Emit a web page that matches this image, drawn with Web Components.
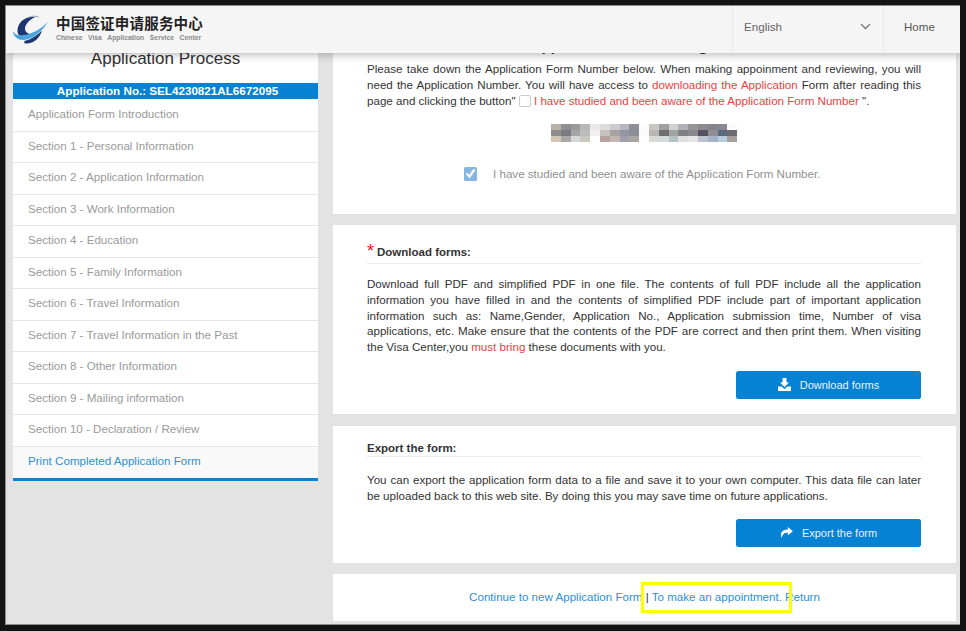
<!DOCTYPE html>
<html><head><meta charset="utf-8">
<style>
html,body{margin:0;height:100%;background:#141414;overflow:hidden}
body{padding:5px 6px 6px 5px;box-sizing:border-box;font:11.6px/15.75px "Liberation Sans","Noto Sans CJK SC",sans-serif;color:#333}
</style></head><body>
<visa-window>
  <visa-header slot="header"></visa-header>
  <visa-sidebar slot="side" number="SEL4230821AL6672095">
    <visa-step>Application Form Introduction</visa-step>
    <visa-step>Section 1 - Personal Information</visa-step>
    <visa-step>Section 2 - Application Information</visa-step>
    <visa-step>Section 3 - Work Information</visa-step>
    <visa-step>Section 4 - Education</visa-step>
    <visa-step>Section 5 - Family Information</visa-step>
    <visa-step>Section 6 - Travel Information</visa-step>
    <visa-step>Section 7 - Travel Information in the Past</visa-step>
    <visa-step>Section 8 - Other Information</visa-step>
    <visa-step>Section 9 - Mailing information</visa-step>
    <visa-step>Section 10 - Declaration / Review</visa-step>
    <visa-step active>Print Completed Application Form</visa-step>
  </visa-sidebar>
  <visa-panel slot="main" pad="0 35px 0 34px" height="181">
    <visa-notice></visa-notice>
  </visa-panel>
  <visa-panel slot="main" pad="19px 35px 0 34px" height="189">
    <visa-section style="--hp:3px;--pm:12px;--bt:16px" heading="Download forms:" star label="Download forms" icon="download">
      Download full PDF and simplified PDF in one file. The contents of full PDF include all the application information you have filled in and the contents of simplified PDF include part of important application information such as: Name,Gender, Application No., Application submission time, Number of visa applications, etc. Make ensure that the contents of the PDF are correct and then print them. When visiting the Visa Center,you <span style="color:#e8423f">must bring</span> these documents with you.
    </visa-section>
  </visa-panel>
  <visa-panel slot="main" pad="14.5px 35px 0 34px" height="137">
    <visa-section style="--hp:0px;--pm:15px;--bt:15px" heading="Export the form:" label="Export the form" icon="share">
      You can export the application form data to a file and save it to your own computer. This data file can later be uploaded back to this web site. By doing this you may save time on future applications.
    </visa-section>
  </visa-panel>
  <visa-panel slot="main" pad="0" height="47">
    <visa-links></visa-links>
  </visa-panel>
</visa-window>
<script>
function def(name, css, html, init){
  customElements.define(name, class extends HTMLElement{
    connectedCallback(){
      if(this.shadowRoot) return;
      const r=this.attachShadow({mode:'open'});
      r.innerHTML='<style>'+css+'</style>'+(typeof html==='function'?html(this):html);
      if(init) init(this,r);
    }
  });
}
def('visa-window',`
  :host{display:block;position:relative;height:620px;width:955px;background:#e3e3e3;border:1px solid #8c8c8c;border-width:1px 0 1px 1px;box-sizing:border-box;overflow:hidden}
  .hd{position:absolute;left:0;right:0;top:0;z-index:5}
  .body{display:flex;align-items:flex-start;padding-left:7px;height:100%;box-sizing:border-box}
  .side{flex:0 0 305px;margin-top:32px}
  .main{flex:0 0 623px;margin-left:15px;display:flex;flex-direction:column;gap:11.5px;padding-top:26.500px}
`,`<div class="hd"><slot name="header"></slot></div>
<div class="body"><div class="side"><slot name="side"></slot></div><div class="main"><slot name="main"></slot></div></div>`);

const LOGO=`<svg width="35" height="29" viewBox="0 0 35 29" style="overflow:visible" aria-hidden="true">
<path d="M14 2.500C19 0 24 0 27 2.500 23 1.500 18 1.500 14 2.500z" fill="#8fa3bf"/>
<path d="M22 2C12 1 5 7 4.500 15 4.300 17 5 19 6 20.500 10 21 14 20.500 17 19 13 18 11 15 12.500 11 14 7 18 4 22 2z" fill="#1b3672"/>
<path d="M12 28.500C20 29.500 27 23 29 15.500 24 20.500 18 24.500 11.500 26c-.5.800-.3 1.800.5 2.500z" fill="#1b3672"/>
<path d="M35 7C28 14 18 20 8 20.500 5 20.500 2 19.500 .3 16.500-.5 20 4 25 10 25 20 25 30 15 35 7z" fill="#4aa3dc"/>
</svg>`;
def('visa-header',`
  :host{display:flex;height:47px;background:#f5f5f5;box-shadow:0 2px 8px rgba(0,0,0,.28);font-size:11.6px;color:#666}
  .logo{display:flex;align-items:center;gap:8px;padding-left:7px;flex:1}
  .names{display:flex;flex-direction:column;position:relative;top:-1.5px}
  .cn{font:700 14.5px/18px "Noto Sans CJK SC","Liberation Serif",serif;color:#222;letter-spacing:.2px;white-space:nowrap}
  .en{font:700 6.8px/9px "Liberation Sans",sans-serif;color:#8a8a8a;word-spacing:3.7px;white-space:nowrap;margin-top:1px}
  .lang{width:151px;box-sizing:border-box;border-left:1px solid #e9e9e9;display:flex;align-items:center;justify-content:space-between;padding:0 12px 0 11px}
  .home{width:77px;box-sizing:border-box;border-left:1px solid #e9e9e9;display:flex;align-items:center;padding-left:20px;color:#555}
  span{position:relative;top:-3px}
  svg.c{position:relative;top:-3px}
`,`<div class="logo">${LOGO}<div class="names"><div class="cn">中国签证申请服务中心</div><div class="en">Chinese Visa Application Service Center</div></div></div>
<div class="lang"><span>English</span><svg class="c" width="11" height="7" viewBox="0 0 11 7"><path d="M1 1l4.500 4.500L10 1" fill="none" stroke="#777" stroke-width="1.300"/></svg></div>
<div class="home"><span>Home</span></div>`);

def('visa-sidebar',`
  :host{display:block;background:#fff;border-bottom:3px solid #0682d4}
  h2{margin:0;font:400 17px/22px "Liberation Sans",sans-serif;color:#333;text-align:center;padding:10px 0 13px}
  .no{background:#0682d4;color:#fff;font-weight:700;font-size:11.650px;line-height:15px;height:16px;text-align:center;padding-left:4px}
`,t=>`<h2>Application Process</h2><div class="no">Application No.: ${t.getAttribute('number')}</div><slot></slot>`);

def('visa-step',`
  :host{display:block;height:31.55px;box-sizing:border-box;border-top:1px solid #e6e6e6;padding:6px 0 0 15px;color:#9a9a9a;line-height:16px}
  :host(:first-of-type){border-top:0;padding-top:7px}
  :host([active]){background:#f9f9f9;color:#2d8fd8}
`,`<slot></slot>`);

def('visa-panel',`
  :host{display:block;background:#fff;box-sizing:border-box}
`,t=>{t.style.padding=t.getAttribute('pad');t.style.height=t.getAttribute('height')+'px';return `<slot></slot>`});

const MOSAIC=[
"b9b1a6 8f8f93 9a9a9d b8b8b8 e9e9e9 dcdcdc c9cdd0 b4b8be 8d9196 fbfbfb c8c6c2 a1a1a1 d0d0d0 b1b1b5 959599 8b8b90 84848a 8c8890 fafafa",
"8d8d8d 7b7b7f a5a5a8 bcbcbc f0f0f0 c4c2bc a8a3a0 9196a0 8a8f98 fafafa b9b7b4 6f6f72 a0a4a5 808085 8a8a8e 565060 8f8f95 5b6a7c 6d6a70",
"d3c6b3 a8a8a6 d8d8d8 c8c6be ffffff b7a4a0 c3b6b0 a19fae a9a6a4 fdfdfd d8d8d4 d1dbd9 b4c2c4 dfe0e0 e6e6e6 bcc5cf a4b4c6 b9ccdf a7a09c"
];
def('visa-mosaic',`:host{display:block;width:186px;height:18px;margin:0 auto}
 svg{display:block}`,()=>{
  let s='';MOSAIC.forEach((row,y)=>row.split(' ').forEach((c,x)=>{s+=`<rect x="${x*9.8}" y="${y*6}" width="9.9" height="6.1" fill="#${c}"/>`}));
  return `<svg width="186" height="18" viewBox="0 0 186 18" shape-rendering="crispEdges">${s}</svg>`});

def('visa-notice',`
  :host{display:block;position:relative;color:#333}
  h3{margin:0;height:27px;font:700 15px/26px "Liberation Sans",sans-serif;text-align:center;color:#333;white-space:nowrap;overflow:hidden;box-sizing:border-box}
  p{margin:0;text-align:justify;padding-top:1.5px}
  em{font-style:normal;color:#e8423f}
  .box{display:inline-block;width:10px;height:10px;border:1px solid #ccc;border-radius:2px;background:#fff;vertical-align:-2px}
  .check{display:flex;align-items:center;gap:16px;margin:24.500px 0 0 97px;color:#8f8f8f}
  svg{display:block}
  visa-mosaic{margin-top:15.500px}
`,`<h3>Application Form Saving Notice</h3>
<p>Please take down the Application Form Number below. When making appoinment and reviewing, you will need the Application Number. You will have access to <em>downloading the Application</em> Form after reading this page and clicking the button" <span class="box"></span> <em>I have studied and been aware of the Application Form Number</em> ".</p>
<visa-mosaic></visa-mosaic>
<div class="check"><svg width="13" height="14" viewBox="0 0 13 14"><rect width="13" height="14" rx="1.500" fill="#85b5e0"/><path d="M2.500 6.500l3 3 5-7" fill="none" stroke="#fff" stroke-width="2.200"/></svg><span>I have studied and been aware of the Application Form Number.</span></div>`);

const ICONS={
 download:`<svg width="13" height="13" viewBox="0 0 13 13"><path d="M4.500 0h4v4.500h2.500L6.500 9 2 4.500h2.500z" fill="#fff"/><path d="M0 8.500h3.500L6.500 11l3-2.500H13V13H0z" fill="#fff"/></svg>`,
 share:`<svg width="13" height="11" viewBox="0 0 14 12"><path d="M8.500 0L14 4.500 8.500 9V6.300C5 6.200 2.800 7 1.700 12 .2 8.500.2 3.200 8.500 2.700z" fill="#fff"/></svg>`
};
def('visa-section',`
  :host{display:block;color:#333}
  h4{margin:0;font:700 11.5px/16px "Liberation Sans",sans-serif;color:#333;border-bottom:1px solid #eee;padding-bottom:var(--hp,2px);display:flex;align-items:flex-end;gap:3px}
  i{color:#e8201c;font-style:normal;font-weight:400;font-size:18px;line-height:14px;position:relative;top:-2px}
  p{margin:var(--pm,12px) 0 0;text-align:justify}
  .r{display:flex;justify-content:flex-end;margin-top:var(--bt,16px)}
  button{all:unset;box-sizing:border-box;width:185px;height:28px;background:#0682d4;border-radius:2.500px;color:#e9f4fb;font:11px/26px "Liberation Sans",sans-serif;display:flex;align-items:center;justify-content:center;gap:9px}
  svg{display:block}
`,t=>`<h4>${t.hasAttribute('star')?'<i>*</i>':''}<span>${t.getAttribute('heading')}</span></h4>
<p><slot></slot></p>
<div class="r"><button>${ICONS[t.getAttribute('icon')]}<span>${t.getAttribute('label')}</span></button></div>`);

def('visa-links',`
  :host{display:block;position:relative;text-align:center;color:#333;line-height:45px;height:47px}
  a{color:#2d8fd8;text-decoration:none}
  .mark{position:absolute;left:308px;top:8px;width:151px;height:31px;box-sizing:border-box;border:3px solid #ffff00;pointer-events:none}
`,`<a>Continue to new Application Form</a> | <a>To make an appointment.</a> <a>Return</a><div class="mark"></div>`);
</script>
</body></html>
